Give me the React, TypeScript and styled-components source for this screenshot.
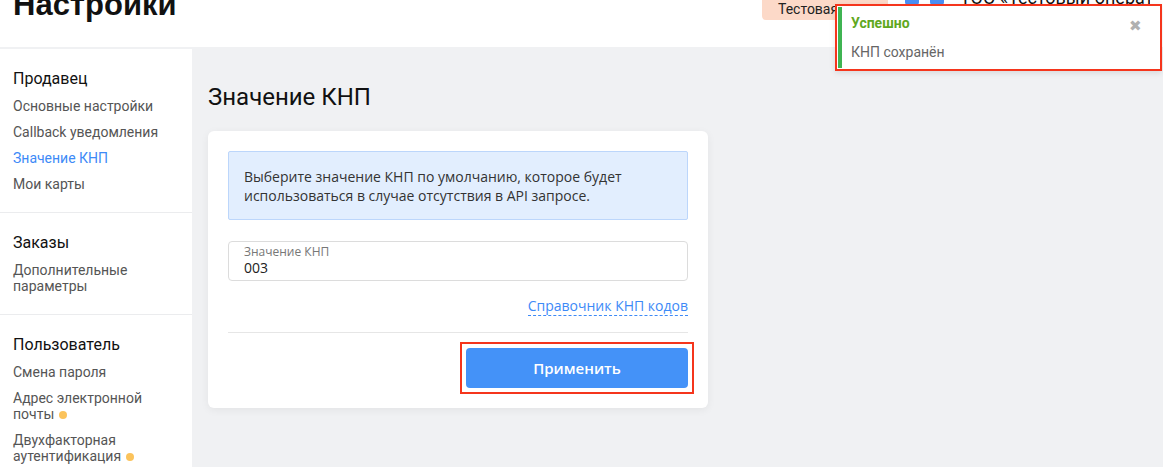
import React from "react";
import styled, { createGlobalStyle } from "styled-components";

type NavItem = {
	label: string;
	active?: boolean;
	dot?: boolean;
};

type NavSection = {
	title: string;
	items: NavItem[];
};

const sections: NavSection[] = [
	{
		title: "Продавец",
		items: [
			{ label: "Основные настройки" },
			{ label: "Callback уведомления" },
			{ label: "Значение КНП", active: true },
			{ label: "Мои карты" },
		],
	},
	{
		title: "Заказы",
		items: [{ label: "Дополнительные параметры" }],
	},
	{
		title: "Пользователь",
		items: [
			{ label: "Смена пароля" },
			{ label: "Адрес электронной почты", dot: true },
			{ label: "Двухфакторная аутентификация", dot: true },
		],
	},
];

export default function App() {
	return (
		<>
			<GlobalStyle />
			<Page>
				<Header>
					<PageTitle>Настройки</PageTitle>
					<HeaderRight>
						<TestBadge>Тестовая</TestBadge>
						<HeaderIcons>
							<IconStub />
							<IconStub />
						</HeaderIcons>
						<AccountName>ТОО «Тестовый оператор»</AccountName>
					</HeaderRight>
				</Header>
				<Body>
					<Sidebar>
						{sections.map((section) => (
							<Section key={section.title}>
								<SectionTitle>{section.title}</SectionTitle>
								{section.items.map((item) => (
									<NavLink key={item.label} $active={item.active}>
										{item.label}
										{item.dot && <Dot />}
									</NavLink>
								))}
							</Section>
						))}
					</Sidebar>
					<Main>
						<Heading>Значение КНП</Heading>
						<Card>
							<Info>
								Выберите значение КНП по умолчанию, которое будет
								<br />
								использоваться в случае отсутствия в API запросе.
							</Info>
							<Field>
								<FieldLabel>Значение КНП</FieldLabel>
								<FieldValue>003</FieldValue>
							</Field>
							<LinkRow>
								<DashedLink>Справочник КНП кодов</DashedLink>
							</LinkRow>
							<Divider />
							<Actions>
								<Highlight>
									<ApplyButton>Применить</ApplyButton>
								</Highlight>
							</Actions>
						</Card>
					</Main>
				</Body>
				<Toast>
					<ToastBar />
					<ToastContent>
						<ToastTitle>Успешно</ToastTitle>
						<ToastText>КНП сохранён</ToastText>
					</ToastContent>
					<ToastClose>✖</ToastClose>
				</Toast>
			</Page>
		</>
	);
}

const GlobalStyle = createGlobalStyle`
	body {
		margin: 0;
		font-family: Roboto, "Noto Sans", sans-serif;
		background: #f0f1f3;
	}
`;

const Page = styled.div`
	position: relative;
	width: 1163px;
	height: 467px;
	overflow: hidden;
	display: flex;
	flex-direction: column;
`;

const Header = styled.header`
	height: 47px;
	flex-shrink: 0;
	background: #fff;
	border-bottom: 2px solid #f0f1f3;
	display: flex;
	justify-content: space-between;
	align-items: flex-start;
	overflow: hidden;
`;

const PageTitle = styled.h1`
	margin: -11px 0 0 13px;
	font-family: "Liberation Sans", Arial, sans-serif;
	font-size: 31px;
	font-weight: 700;
	line-height: 1;
	color: #111;
`;

const HeaderRight = styled.div`
	display: flex;
	align-items: flex-start;
	margin-right: 13px;
`;

const TestBadge = styled.div`
	width: 110px;
	padding: 2px 0 4px 16px;
	background: #fcd9c8;
	color: #222;
	font-size: 14px;
	line-height: 14px;
	border-radius: 0 0 4px 4px;
`;

const HeaderIcons = styled.div`
	display: flex;
	gap: 11px;
	margin: -10px 0 0 17px;
`;

const IconStub = styled.span`
	width: 14px;
	height: 15px;
	border-radius: 3px;
	background: #4a8ff5;
`;

const AccountName = styled.div`
	width: 190px;
	margin: -11px 0 0 16px;
	font-size: 18px;
	line-height: 18px;
	color: #111;
	text-decoration: underline;
	white-space: nowrap;
	overflow: hidden;
`;

const Body = styled.div`
	flex: 1;
	display: flex;
`;

const Sidebar = styled.nav`
	width: 192px;
	flex-shrink: 0;
	background: #fff;
`;

const Section = styled.div`
	padding: 20px 13px;
	border-bottom: 1px solid #ebecee;
	display: flex;
	flex-direction: column;
	gap: 10px;
`;

const SectionTitle = styled.div`
	font-size: 16px;
	line-height: 19px;
	color: #111;
`;

const NavLink = styled.div<{ $active?: boolean }>`
	font-size: 14px;
	line-height: 16px;
	color: ${({ $active }) => ($active ? "#3d8af7" : "#555")};
`;

const Dot = styled.span`
	display: inline-block;
	width: 8px;
	height: 8px;
	margin-left: 5px;
	border-radius: 50%;
	background: #fbc35c;
	vertical-align: 0;
`;

const Main = styled.main`
	flex: 1;
	padding: 34px 16px 0;
`;

const Heading = styled.h2`
	margin: 0 0 20px;
	font-size: 24px;
	font-weight: 400;
	line-height: 28px;
	color: #111;
`;

const Card = styled.section`
	width: 460px;
	padding: 20px;
	background: #fff;
	border-radius: 6px;
	box-shadow: 0 2px 8px rgba(0, 0, 0, 0.06);
	font-family: "Open Sans", sans-serif;
`;

const Info = styled.div`
	background: #e2eefe;
	border: 1px solid #bcd6fb;
	border-radius: 2px;
	padding: 15px 15px 14px;
	font-size: 14px;
	line-height: 19px;
	color: #333;
`;

const Field = styled.div`
	margin-top: 21px;
	height: 38px;
	border: 1px solid #dcdcdc;
	border-radius: 4px;
	padding: 0 15px;
	display: flex;
	flex-direction: column;
	justify-content: center;
`;

const FieldLabel = styled.div`
	font-size: 12px;
	line-height: 14px;
	color: #777;
`;

const FieldValue = styled.div`
	font-size: 14px;
	line-height: 18px;
	color: #222;
`;

const LinkRow = styled.div`
	display: flex;
	justify-content: flex-end;
	margin-top: 16px;
`;

const DashedLink = styled.a`
	font-size: 14px;
	line-height: 18px;
	color: #3d8af7;
	border-bottom: 1px dashed #3d8af7;
	cursor: pointer;
`;

const Divider = styled.hr`
	margin: 16px 0 0;
	border: 0;
	border-top: 1px solid #e6e6e6;
`;

const Actions = styled.div`
	display: flex;
	justify-content: flex-end;
	margin: 9px -6px -20px 0;
	padding-bottom: 14px;
`;

const Highlight = styled.div`
	border: 2px solid #f5351c;
	padding: 4px;
`;

const ApplyButton = styled.button`
	display: block;
	width: 222px;
	height: 40px;
	border: 0;
	border-radius: 4px;
	background: #4492f8;
	color: #fff;
	font-family: "Open Sans", sans-serif;
	font-size: 15px;
	font-weight: 600;
	cursor: pointer;
`;

const Toast = styled.div`
	position: absolute;
	top: 4px;
	left: 835px;
	width: 323px;
	height: 63px;
	background: #fff;
	border: 2px solid #f5351c;
	display: flex;
	box-shadow: 0 2px 6px rgba(0, 0, 0, 0.1);
`;

const ToastBar = styled.div`
	width: 4px;
	margin: 1px 0 1px 1px;
	background: #3fb452;
`;

const ToastContent = styled.div`
	flex: 1;
	padding: 9px 9px 7px;
	display: flex;
	flex-direction: column;
	gap: 12px;
`;

const ToastTitle = styled.div`
	font-size: 14px;
	font-weight: 700;
	line-height: 17px;
	color: #60a81e;
`;

const ToastText = styled.div`
	font-size: 14px;
	line-height: 17px;
	color: #666;
`;

const ToastClose = styled.div`
	margin: 11px 18px 0 0;
	font-size: 15px;
	line-height: 18px;
	color: #b0b0b0;
`;
